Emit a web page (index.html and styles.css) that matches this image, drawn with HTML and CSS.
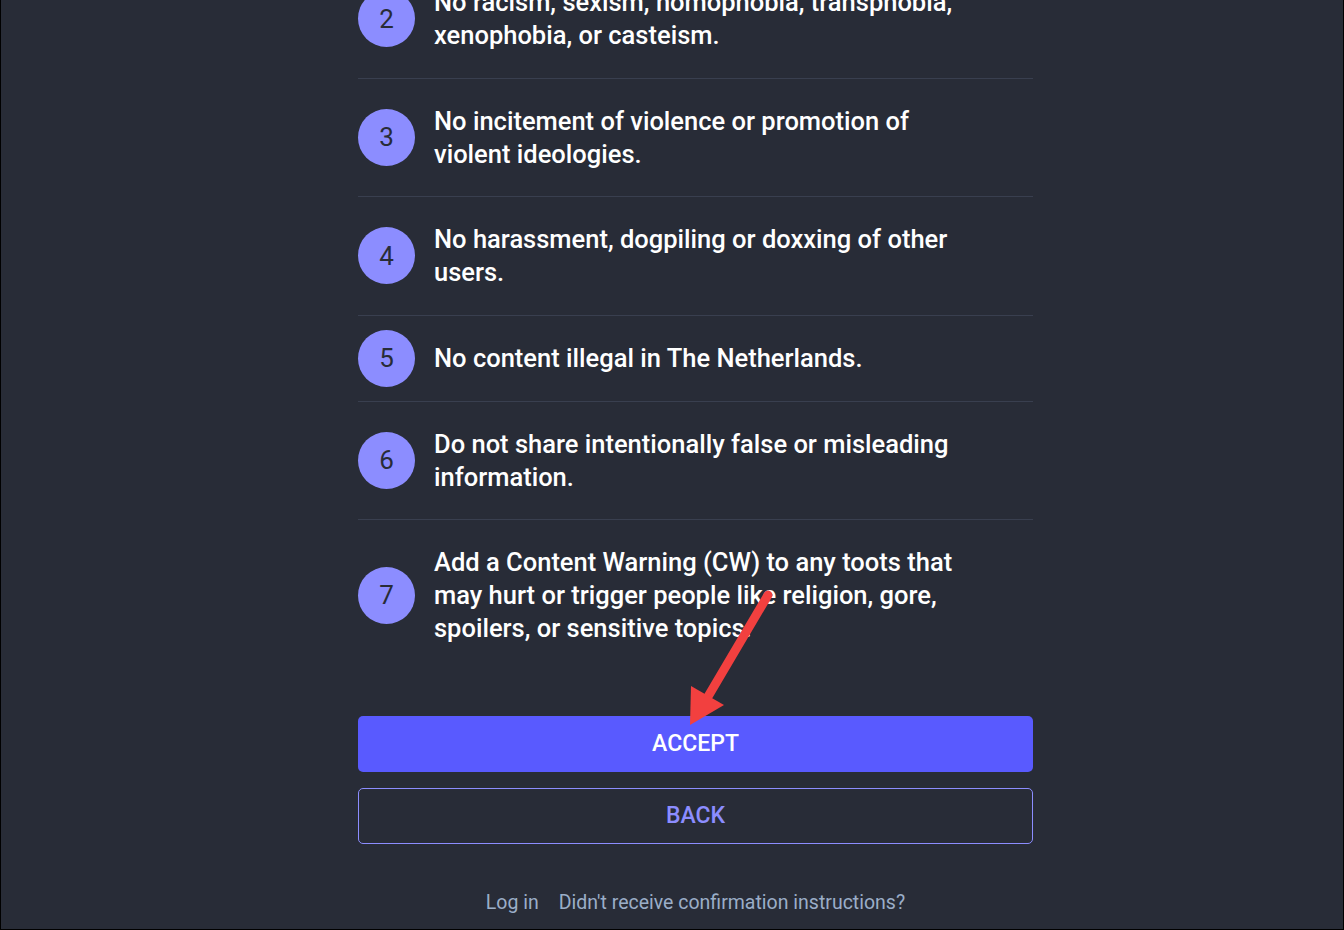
FILE: index.html
```html
<!DOCTYPE html>
<html lang="en">
<head>
    <meta charset="UTF-8">
    <meta name="viewport" content="width=device-width, initial-scale=1.0">
    <title>Server rules</title>
    <link rel="stylesheet" href="styles.css">
</head>
<body>

    <div class="frame">
        <div class="content">
            <ol class="rules-list">
                <li class="rule">
                    <span class="rule-number">2</span>
                    <span class="rule-text">No racism, sexism, homophobia, transphobia, xenophobia, or casteism.</span>
                </li>
                <li class="rule">
                    <span class="rule-number">3</span>
                    <span class="rule-text">No incitement of violence or promotion of violent ideologies.</span>
                </li>
                <li class="rule">
                    <span class="rule-number">4</span>
                    <span class="rule-text">No harassment, dogpiling or doxxing of other users.</span>
                </li>
                <li class="rule">
                    <span class="rule-number">5</span>
                    <span class="rule-text">No content illegal in The Netherlands.</span>
                </li>
                <li class="rule">
                    <span class="rule-number">6</span>
                    <span class="rule-text">Do not share intentionally false or misleading information.</span>
                </li>
                <li class="rule">
                    <span class="rule-number">7</span>
                    <span class="rule-text">Add a Content Warning (CW) to any toots that may hurt or trigger people like religion, gore, spoilers, or sensitive topics.</span>
                </li>
            </ol>

            <div class="actions">
                <button class="button button-primary">Accept</button>
                <button class="button button-secondary">Back</button>
            </div>

            <div class="footer-links">
                <a href="#">Log in</a>
                <a href="#">Didn't receive confirmation instructions?</a>
            </div>
        </div>

        <!-- annotation arrow -->
        <svg class="arrow" width="120" height="150" viewBox="0 0 120 150">
            <line x1="98" y1="15" x2="36" y2="120" stroke="#f2403f" stroke-width="9" stroke-linecap="round"/>
            <polygon points="21,106 20,145 54,125" fill="#f2403f"/>
        </svg>
    </div>

</body>
</html>
```

FILE: styles.css
```css
body {
    margin: 0;
    padding: 0;
    background: #000;
    font-family: Roboto, 'Liberation Sans', sans-serif;
    overflow: hidden;
}

.frame {
    position: relative;
    height: 929px;
    margin: 0 1px;
    background: #282c37;
    overflow: hidden;
}

.content {
    width: 675px;
    margin-left: 357px;
}

.rules-list {
    list-style: none;
    margin: -40px 0 0;
    padding: 0;
}

.rule {
    display: flex;
    align-items: center;
    gap: 19px;
    padding: 14px 58px 14px 0;
    border-bottom: 1px solid #393f4f;
}

.rule:last-child {
    border-bottom: none;
}

.rule-number {
    flex: 0 0 57px;
    height: 57px;
    border-radius: 50%;
    background: #8c8dff;
    color: #282c37;
    font-size: 26px;
    display: flex;
    align-items: center;
    justify-content: center;
}

.rule-text {
    padding: 12px 0 11.5px;
    color: #fff;
    font-size: 25.5px;
    font-weight: 500;
    line-height: 33px;
}

.actions {
    display: flex;
    flex-direction: column;
    gap: 16px;
    margin-top: 45px;
}

.button {
    height: 56px;
    border-radius: 5px;
    font-family: Roboto, 'Liberation Sans', sans-serif;
    font-size: 23px;
    font-weight: 500;
    text-transform: uppercase;
    cursor: pointer;
}

.button-primary {
    background: #595aff;
    color: #fff;
    border: none;
}

.button-secondary {
    background: none;
    color: #8c8dff;
    border: 1px solid #8c8dff;
}

.footer-links {
    display: flex;
    justify-content: center;
    gap: 20px;
    margin-top: 47px;
    font-size: 19.5px;
}

.footer-links a {
    color: #9baec8;
    text-decoration: none;
}

.arrow {
    position: absolute;
    left: 669px;
    top: 580px;
}
```
